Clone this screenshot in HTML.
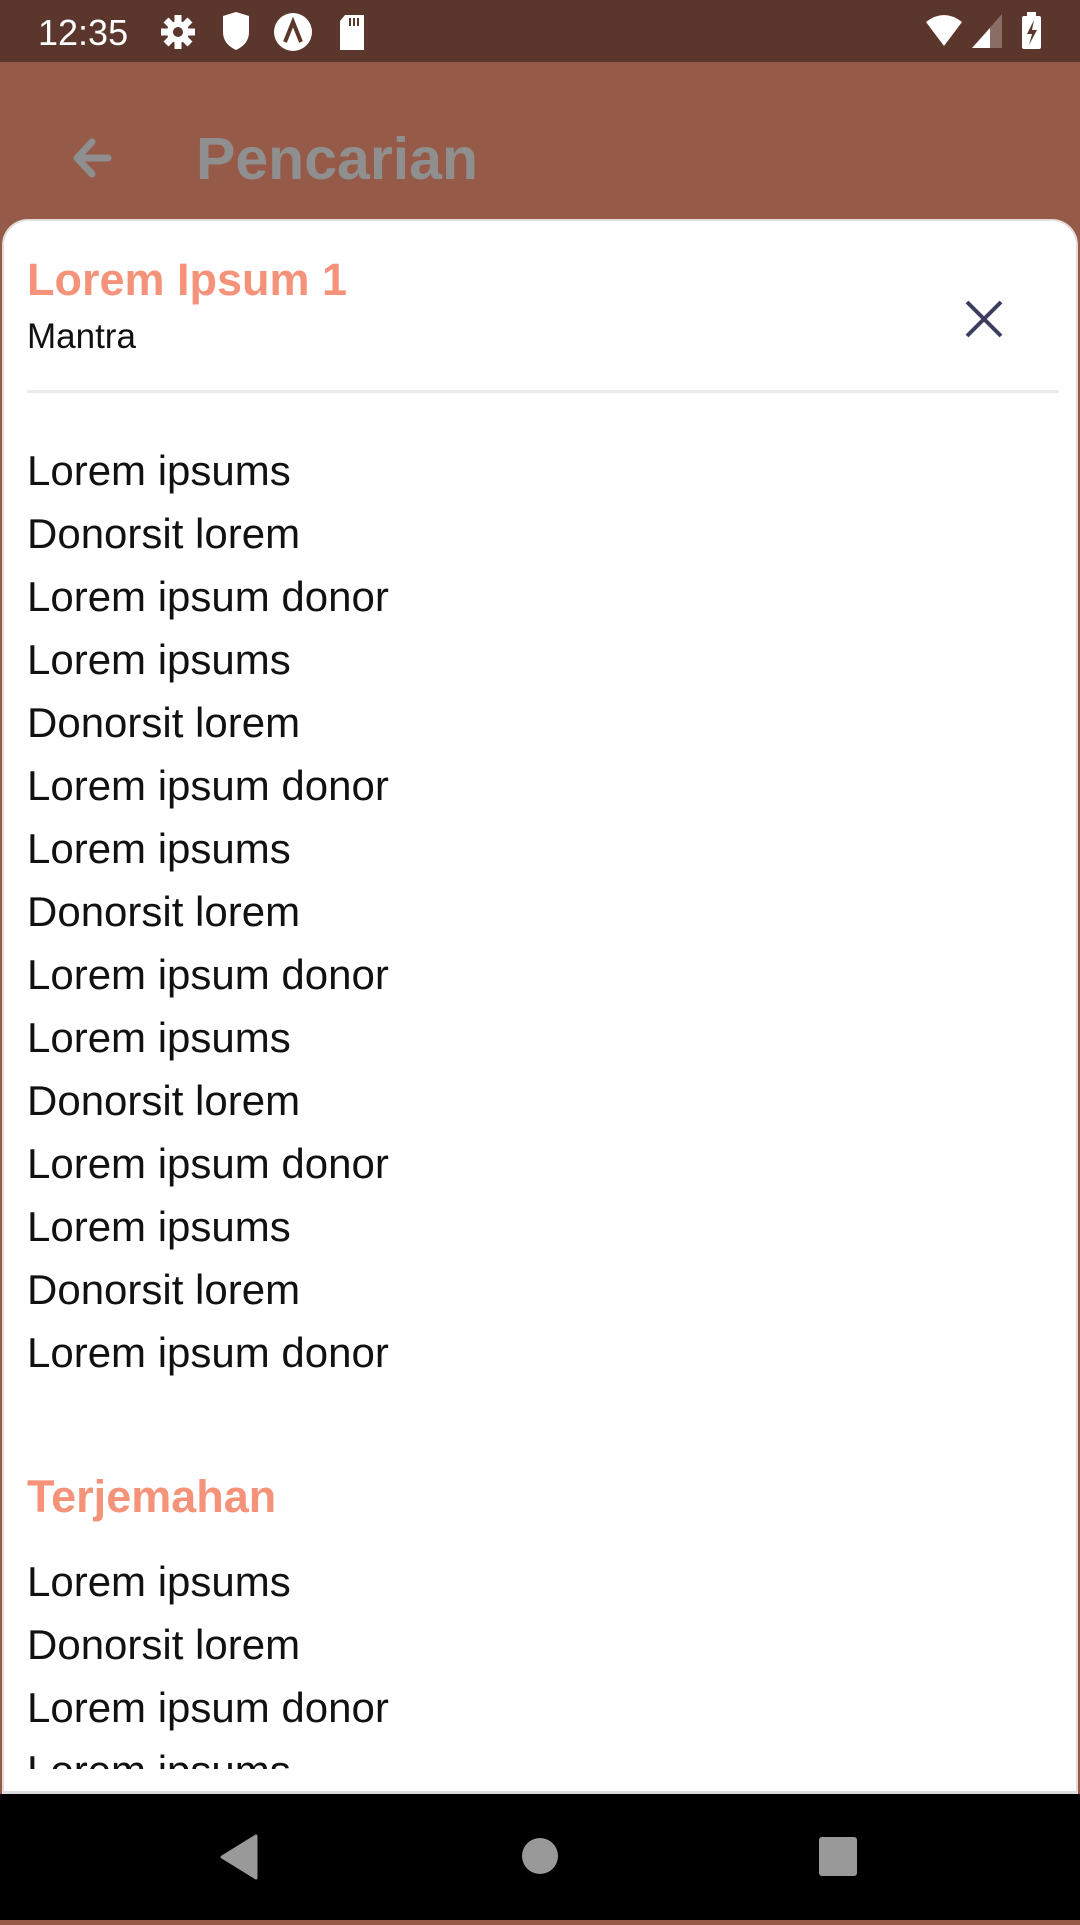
<!DOCTYPE html>
<html><head><meta charset="utf-8"><style>
*{margin:0;padding:0;box-sizing:border-box}
body{width:1080px;height:1920px;overflow:hidden;background:#955a48;font-family:"Liberation Sans",Arial,sans-serif;position:relative}
.status{position:absolute;left:0;top:0;width:1080px;height:62px;background:#5b362c;color:#fff}
.time{position:absolute;left:38px;top:12px;font-size:36px}
.appbar{position:absolute;top:62px;left:0;width:1080px;height:170px;background:#955a48}
.title{position:absolute;left:196px;top:63px;font-size:59px;font-weight:bold;color:#8f8f8f}
.sheet{position:absolute;left:2px;top:219px;width:1076px;height:1575px;background:#fff;border-radius:26px 26px 0 0;border:2px solid #e2dcda;border-bottom:3px solid #ddd;overflow:hidden}
.h{position:absolute;left:23px;font-size:45px;font-weight:bold;color:#f4937a}
.line{position:absolute;left:23px;font-size:42px;color:#111;white-space:nowrap}
.nav{position:absolute;left:0;top:1794px;width:1080px;bottom:0;background:#000}
</style></head><body>
<div class="status">
<div class="time">12:35</div>
<svg width="1080" height="62" style="position:absolute;left:0;top:0">
<g fill="#fff">
<circle cx="178" cy="32" r="11"/><g stroke="#fff" stroke-width="7"><line x1="178" y1="15" x2="178" y2="49"/><line x1="161" y1="32" x2="195" y2="32"/><line x1="166" y1="20" x2="190" y2="44"/><line x1="190" y1="20" x2="166" y2="44"/></g><circle cx="178" cy="32" r="5" fill="#5b362c"/>
<path d="M223 16 L236 12 L249 16 L249 32 Q249 44 236 50 Q223 44 223 32Z"/>
<circle cx="293" cy="32" r="19"/><path d="M285 42 L293 22 L301 42" stroke="#5b362c" stroke-width="4" fill="none"/>
<path d="M345 15 L364 15 L364 50 L340 50 L340 21Z"/><g fill="#5b362c"><rect x="349" y="18" width="2" height="8"/><rect x="353" y="18" width="2" height="8"/><rect x="357" y="18" width="2" height="8"/></g>
<path d="M926 22 Q944 8 962 22 L944 46Z"/>
<path d="M972 48 L1002 14 L1002 48Z" fill="#8a6e66"/><path d="M972 48 L990 28 L990 48Z"/>
<rect x="1022" y="16" width="19" height="33" rx="2"/><rect x="1027" y="12" width="9" height="5"/><path d="M1034 20 L1027 34 L1032 34 L1029 45 L1037 30 L1032 30Z" fill="#5b362c"/>
</g></svg>
</div>
<div class="appbar">
<svg width="60" height="60" style="position:absolute;left:64px;top:66px"><path d="M44 30 H14 M28 14 L13 30 L28 46" stroke="#8f8f8f" stroke-width="7" fill="none" stroke-linecap="round" stroke-linejoin="round"/></svg>
<div class="title">Pencarian</div>
</div>
<div class="sheet">
<div class="h" style="top:33px">Lorem Ipsum 1</div>
<div class="line" style="top:96px;font-size:35px">Mantra</div>
<svg width="44" height="44" style="position:absolute;left:958px;top:76px"><path d="M5 5 L39 39 M39 5 L5 39" stroke="#3d3d60" stroke-width="4"/></svg>
<div style="position:absolute;left:23px;top:169px;width:1032px;height:3px;background:#ebebeb"></div>
<div class="line" style="top:226px">Lorem ipsums</div>
<div class="line" style="top:289px">Donorsit lorem</div>
<div class="line" style="top:352px">Lorem ipsum donor</div>
<div class="line" style="top:415px">Lorem ipsums</div>
<div class="line" style="top:478px">Donorsit lorem</div>
<div class="line" style="top:541px">Lorem ipsum donor</div>
<div class="line" style="top:604px">Lorem ipsums</div>
<div class="line" style="top:667px">Donorsit lorem</div>
<div class="line" style="top:730px">Lorem ipsum donor</div>
<div class="line" style="top:793px">Lorem ipsums</div>
<div class="line" style="top:856px">Donorsit lorem</div>
<div class="line" style="top:919px">Lorem ipsum donor</div>
<div class="line" style="top:982px">Lorem ipsums</div>
<div class="line" style="top:1045px">Donorsit lorem</div>
<div class="line" style="top:1108px">Lorem ipsum donor</div>
<div class="h" style="top:1250px">Terjemahan</div>
<div class="line" style="top:1337px">Lorem ipsums</div>
<div class="line" style="top:1400px">Donorsit lorem</div>
<div class="line" style="top:1463px">Lorem ipsum donor</div>
<div style="position:absolute;left:0;top:1526px;width:1076px;height:22px;overflow:hidden"><div class="line" style="top:0">Lorem ipsums</div></div>
</div>
<div class="nav">
<svg width="1080" height="126"><g fill="#999">
<path d="M256 42 L256 84 L222 63Z" stroke="#999" stroke-width="3" stroke-linejoin="round"/>
<circle cx="540" cy="62" r="18"/>
<rect x="819" y="43" width="38" height="39" rx="3"/>
</g></svg>
</div>
</body></html>
